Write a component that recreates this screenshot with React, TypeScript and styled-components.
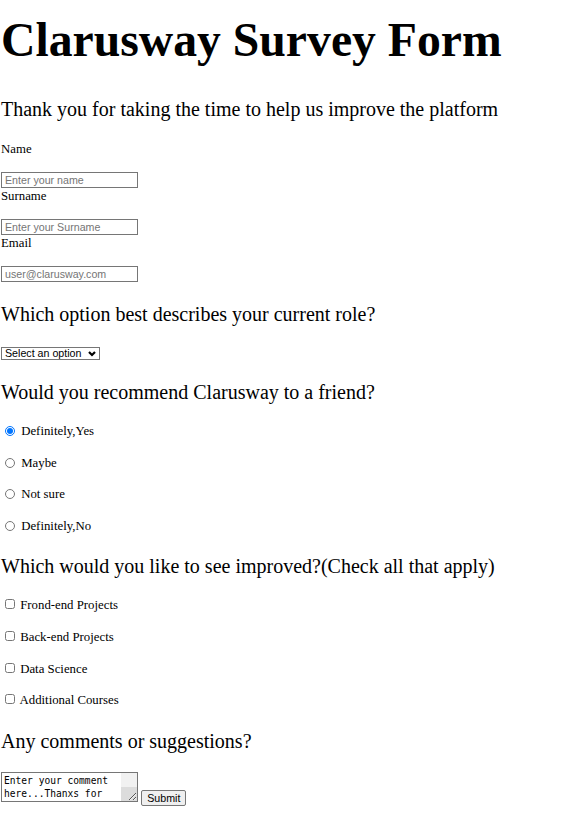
import { createGlobalStyle, styled } from "styled-components";

const GlobalStyle = createGlobalStyle`
    body {
        margin: 0;
        background: #ffffff;
        color: #000000;
        font-family: "Liberation Serif", "Times New Roman", serif;
        font-size: 12.8px;
    }
`;

const radioOptions = ["Definitely,Yes", "Maybe", "Not sure", "Definitely,No"];
const improveOptions = ["Frond-end Projects", "Back-end Projects", "Data Science", "Additional Courses"];

export default function App() {
    return (
        <>
            <GlobalStyle />
            <Form onSubmit={(e) => e.preventDefault()}>
                <Title>Clarusway Survey Form</Title>
                <Subtitle>Thank you for taking the time to help us improve the platform</Subtitle>

                <FieldLabel $first>Name</FieldLabel>
                <TextInput type="text" placeholder="Enter your name" />
                <FieldLabel>Surname</FieldLabel>
                <TextInput type="text" placeholder="Enter your Surname" />
                <FieldLabel>Email</FieldLabel>
                <TextInput type="email" placeholder="user@clarusway.com" />

                <Question>Which option best describes your current role?</Question>
                <SelectWrap>
                    <RoleSelect defaultValue="">
                        <option value="">Select an option</option>
                        <option value="student">Student</option>
                        <option value="fulltime">Full Time Job</option>
                        <option value="learner">Full Time Learner</option>
                        <option value="other">Other</option>
                    </RoleSelect>
                    <Chevron viewBox="0 0 8 6" aria-hidden="true">
                        <polyline points="1,1 4,4 7,1" />
                    </Chevron>
                </SelectWrap>

                <Question>Would you recommend Clarusway to a friend?</Question>
                <OptionList>
                    {radioOptions.map((opt, i) => (
                        <OptionRow key={opt}>
                            <Radio type="radio" name="recommend" defaultChecked={i === 0} />
                            {" "}{opt}
                        </OptionRow>
                    ))}
                </OptionList>

                <Question>Which would you like to see improved?(Check all that apply)</Question>
                <OptionList>
                    {improveOptions.map((opt) => (
                        <OptionRow key={opt}>
                            <Checkbox type="checkbox" />
                            {" "}{opt}
                        </OptionRow>
                    ))}
                </OptionList>

                <Question>Any comments or suggestions?</Question>
                <CommentRow>
                    <CommentBox defaultValue="Enter your comment here...Thanxs for your time and feedback, we appreciate it!" />
                    {" "}
                    <SubmitButton type="submit">Submit</SubmitButton>
                </CommentRow>
            </Form>
        </>
    );
}

const Form = styled.form`
    display: flex;
    flex-direction: column;
    align-items: flex-start;
    padding: 0 0 8px 1px;
`;

const Title = styled.h1`
    margin: 12px 0 0;
    font-size: 47.7px;
    line-height: 55px;
    font-weight: bold;
`;

const Subtitle = styled.h3`
    margin: 31px 0 0;
    font-size: 20px;
    line-height: 23px;
    font-weight: normal;
`;

const Question = styled.h3`
    margin: 21px 0 0;
    font-size: 20px;
    line-height: 23px;
    font-weight: normal;
`;

const FieldLabel = styled.label<{ $first?: boolean }>`
    display: block;
    margin: ${(p) => (p.$first ? "20px" : "0")} 0 0;
    line-height: 16px;
`;

const TextInput = styled.input`
    box-sizing: border-box;
    width: 137px;
    height: 16px;
    margin: 15px 0 0;
    padding: 1px 3px;
    border: 1px solid #767676;
    font-family: "Liberation Sans", Arial, sans-serif;
    font-size: 10.67px;
    &::placeholder {
        color: #757575;
    }
`;

const SelectWrap = styled.div`
    position: relative;
    margin: 21px 0 0;
    line-height: 0;
`;

const RoleSelect = styled.select`
    appearance: none;
    box-sizing: border-box;
    width: 99px;
    height: 13px;
    margin: 0;
    padding: 0 0 0 3px;
    border: 1px solid #767676;
    border-radius: 0;
    background: #ffffff;
    font-family: "Liberation Sans", Arial, sans-serif;
    font-size: 10.67px;
    line-height: 11px;
    color: #000000;
`;

const Chevron = styled.svg`
    position: absolute;
    top: 4px;
    left: 87px;
    width: 8px;
    height: 6px;
    fill: none;
    stroke: #000000;
    stroke-width: 2.2;
    pointer-events: none;
`;

const OptionList = styled.div`
    display: flex;
    flex-direction: column;
    gap: 16.67px;
    margin: 20px 0 0.5px;
`;

const OptionRow = styled.label`
    display: block;
    line-height: 15px;
`;

const Radio = styled.input`
    width: 10px;
    height: 10px;
    margin: 0 3px 0 4px;
    vertical-align: -1px;
`;

const Checkbox = styled.input`
    width: 10px;
    height: 10px;
    margin: 0 2px 0 4px;
    vertical-align: 0;
`;

const CommentRow = styled.div`
    margin-top: 19px;
    line-height: 15px;
`;

const CommentBox = styled.textarea`
    box-sizing: border-box;
    width: 137px;
    height: 30px;
    margin: 0;
    padding: 1px 19px 1px 2px;
    border: 1px solid #767676;
    background:
        linear-gradient(#dcdcdc, #dcdcdc) right bottom / 16px 14px no-repeat,
        linear-gradient(#f1f1f1, #f1f1f1) right top / 16px 100% no-repeat,
        #ffffff;
    font-family: "DejaVu Sans Mono", Consolas, "Liberation Mono", monospace;
    font-size: 9.6px;
    line-height: 13px;
    overflow: hidden;
    resize: both;
    vertical-align: baseline;
`;

const SubmitButton = styled.button`
    box-sizing: border-box;
    height: 16px;
    margin: 0;
    padding: 0 5px;
    border: 1px solid #767676;
    border-radius: 2px;
    background: #efefef;
    font-family: "Liberation Sans", Arial, sans-serif;
    font-size: 10.67px;
    color: #000000;
`;
